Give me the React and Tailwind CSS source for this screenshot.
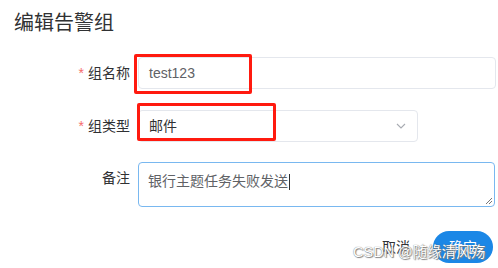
import React from 'react';

const font = { fontFamily: '"Liberation Sans", "Noto Sans CJK SC", sans-serif' };

const FormRow = ({ label, required, children, className = '' }) => (
  <div className={`flex ${className}`}>
    <div className="w-[130px] shrink-0 h-[32px] flex items-center justify-end text-[14px] text-[#303133]">
      {required && <span className="text-[#f56c6c] mr-[4px]">*</span>}
      {label}
    </div>
    <div className="ml-[8px] relative">{children}</div>
  </div>
);

const App = () => {
  return (
    <div className="w-[498px] h-[268px] bg-white relative overflow-hidden" style={font}>
      {/* Title */}
      <div className="pl-[14px] pt-[9px] h-[37px] text-[20px] leading-[28px] text-[#303133]">
        编辑告警组
      </div>

      <div className="mt-[20px]">
        {/* 组名称 */}
        <FormRow label="组名称" required>
          <div className="w-[358px] h-[32px] border border-[#e4e7ed] rounded-[4px] flex items-center pl-[10px] text-[14px] text-[#606266]">
            test123
          </div>
          <div className="absolute left-[-4px] top-[-3px] w-[118px] h-[40px] border-[3px] border-[#ff1a0f] rounded-[2px]" />
        </FormRow>

        {/* 组类型 */}
        <FormRow label="组类型" required className="mt-[21px]">
          <div className="w-[280px] h-[32px] border border-[#e4e7ed] rounded-[4px] flex items-center justify-between pl-[10px] pr-[11px] text-[14px] text-[#303133]">
            <span>邮件</span>
            <svg width="10" height="6" viewBox="0 0 10 6" fill="none">
              <path d="M1 1 L5 5 L9 1" stroke="#a8abb2" strokeWidth="1.1" />
            </svg>
          </div>
          <div className="absolute left-[-1px] top-[-7px] w-[139px] h-[38px] border-[3px] border-[#ff1a0f] rounded-[2px]" />
        </FormRow>

        {/* 备注 */}
        <FormRow label="备注" className="mt-[20px]">
          <div className="w-[357px] h-[45px] border border-[#79b8f0] rounded-[4px] pl-[9px] pt-[8px] text-[14px] leading-[20px] text-[#606266] relative">
            <span>银行主题任务失败发送</span>
            <span className="inline-block w-px h-[16px] bg-[#303133] align-middle ml-[1px]" />
            <svg className="absolute right-[1px] bottom-[1px]" width="8" height="8" viewBox="0 0 8 8">
              <path d="M7 1 L1 7 M7 4 L4 7" stroke="#777" strokeWidth="1" />
            </svg>
          </div>
        </FormRow>
      </div>

      {/* Footer */}
      <div className="flex justify-end items-center gap-[23px] pr-[5px] mt-[24px]">
        <span className="text-[14px] text-[#303133]">取消</span>
        <button className="w-[60px] h-[32px] rounded-full bg-[#1b87e6] text-white text-[14px]">
          确定
        </button>
      </div>

      {/* Watermark */}
      <div className="absolute left-[353px] top-[242px] text-[14.5px] leading-[20px] text-white whitespace-nowrap [text-shadow:0_0_1px_#555,1px_1px_1px_#888]">
        CSDN @随缘清风殇
      </div>
    </div>
  );
};

export default App;
